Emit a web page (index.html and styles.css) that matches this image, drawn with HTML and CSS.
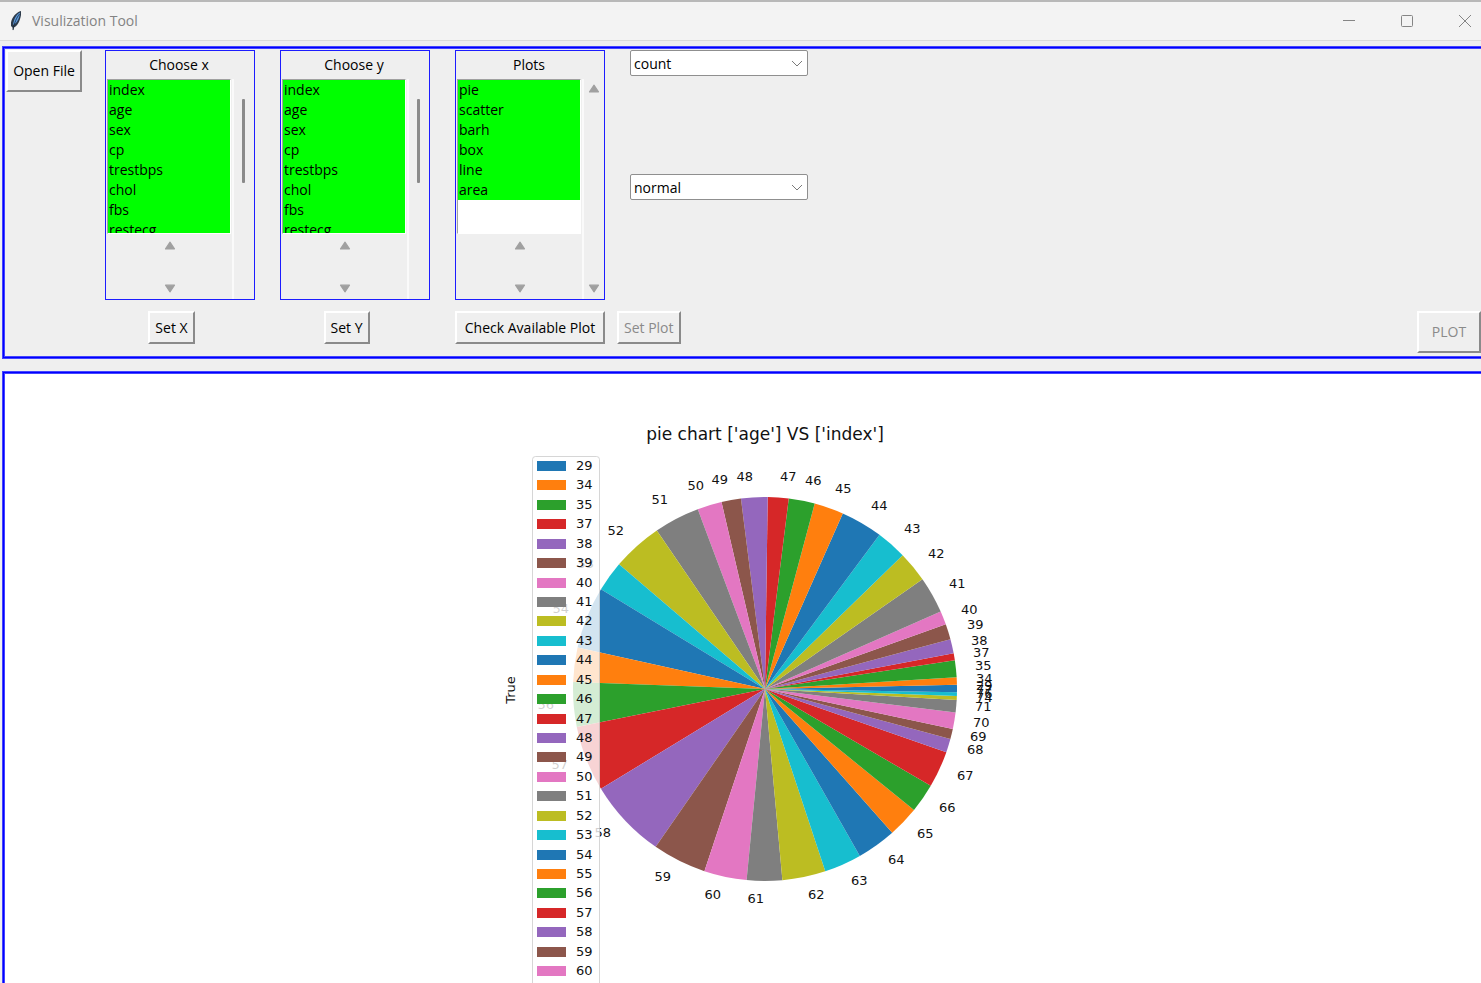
FILE: index.html
```html
<!DOCTYPE html>
<html lang="en">
<head>
<meta charset="utf-8">
<title>Visulization Tool</title>
<link rel="stylesheet" href="styles.css">
</head>
<body>
<header class="titlebar">
  <svg class="feather" viewBox="0 0 14 22" width="14" height="22" aria-hidden="true">
    <path d="M12 1C7.500 2 3 7 2 12.500L2 16L3.500 17.500L4 20.500L5 17.500C8.500 16 11 11 12 5Z" fill="#2c3a4a"/>
    <path d="M11 2.500C8 4 5 8 4 15C8.500 13 10.500 8 11 2.500Z" fill="#5b9be0"/>
    <path d="M10.500 4C7.500 8 5.500 12 4 20" fill="none" stroke="#1c2a3a" stroke-width=".8"/>
  </svg>
  <h1 class="title">Visulization Tool</h1>
  <div class="window-buttons">
    <button class="window-button" aria-label="Minimize"><svg viewBox="0 0 12 12" width="12" height="12"><path d="M0 5.500H12"/></svg></button>
    <button class="window-button" aria-label="Maximize"><svg viewBox="0 0 12 12" width="12" height="12"><rect x=".5" y=".5" width="11" height="11" rx="1"/></svg></button>
    <button class="window-button" aria-label="Close"><svg viewBox="0 0 12 12" width="12" height="12"><path d="M0 0L12 12M12 0L0 12"/></svg></button>
  </div>
</header>

<main class="workspace">
  <section class="panel toolbar">
    <div class="file-column"><button class="button tall">Open File</button></div>

    <div class="column">
      <div class="group">
        <label class="group-label" for="choose-x">Choose x</label>
        <div class="list-side">
          <select class="listbox" id="choose-x" multiple>
            <option>index</option><option>age</option><option>sex</option><option>cp</option><option>trestbps</option><option>chol</option><option>fbs</option><option>restecg</option>
          </select>
          <div class="scroller">
            <svg class="arrow" viewBox="0 0 10 8"><path d="M5 1L9 7H1Z"/></svg>
            <svg class="arrow" viewBox="0 0 10 8"><path d="M5 7L1 1H9Z"/></svg>
          </div>
        </div>
        <div class="track"><span class="thumb"></span></div>
      </div>
      <div class="action narrow"><button class="button">Set X</button></div>
    </div>

    <div class="column">
      <div class="group">
        <label class="group-label" for="choose-y">Choose y</label>
        <div class="list-side">
          <select class="listbox" id="choose-y" multiple>
            <option>index</option><option>age</option><option>sex</option><option>cp</option><option>trestbps</option><option>chol</option><option>fbs</option><option>restecg</option>
          </select>
          <div class="scroller">
            <svg class="arrow" viewBox="0 0 10 8"><path d="M5 1L9 7H1Z"/></svg>
            <svg class="arrow" viewBox="0 0 10 8"><path d="M5 7L1 1H9Z"/></svg>
          </div>
        </div>
        <div class="track"><span class="thumb"></span></div>
      </div>
      <div class="action narrow"><button class="button">Set Y</button></div>
    </div>

    <div class="column">
      <div class="group">
        <label class="group-label" for="plots">Plots</label>
        <div class="list-side">
          <select class="listbox" id="plots" multiple>
            <option>pie</option><option>scatter</option><option>barh</option><option>box</option><option>line</option><option>area</option>
          </select>
          <div class="scroller">
            <svg class="arrow" viewBox="0 0 10 8"><path d="M5 1L9 7H1Z"/></svg>
            <svg class="arrow" viewBox="0 0 10 8"><path d="M5 7L1 1H9Z"/></svg>
          </div>
        </div>
        <div class="track ends">
          <svg class="arrow" viewBox="0 0 10 8"><path d="M5 1L9 7H1Z"/></svg>
          <svg class="arrow" viewBox="0 0 10 8"><path d="M5 7L1 1H9Z"/></svg>
        </div>
      </div>
      <div class="action"><button class="button wide">Check Available Plot</button></div>
    </div>

    <div class="options">
      <div class="combo">
        <select class="combo-select" aria-label="Aggregate"><option>count</option></select>
        <svg class="chevron" viewBox="0 0 12 8"><path d="M1 1L6 6L11 1"/></svg>
      </div>
      <div class="combo">
        <select class="combo-select" aria-label="Mode"><option>normal</option></select>
        <svg class="chevron" viewBox="0 0 12 8"><path d="M1 1L6 6L11 1"/></svg>
      </div>
      <div><button class="button" disabled>Set Plot</button></div>
    </div>

    <button class="button tall plot-button" disabled>PLOT</button>
  </section>

  <section class="panel figure">
    <svg class="chart" id="chart" viewBox="0 0 560 620" width="560" height="620" role="img" aria-label="Pie chart of age against index"></svg>
  </section>
</main>
<script src="chart.js"></script>
</body>
</html>
```
FILE: styles.css
```css
* { box-sizing: border-box; }

body {
  margin: 0;
  height: 100vh;
  display: flex;
  flex-direction: column;
  overflow: hidden;
  background: #efefef;
  color: #000;
  font: 14px/20px "Open Sans", "Noto Sans", sans-serif;
}

button, select { font: inherit; color: inherit; }

.titlebar {
  display: flex;
  align-items: center;
  height: 41px;
  flex: none;
  padding-left: 9px;
  background: #f3f3f3;
  border-top: 2px solid #b8b8b8;
  border-bottom: 1px solid #dadada;
}
.feather { margin-right: 9px; }
.title { margin: 0; font-size: 14px; font-weight: 400; color: #838383; }
.window-buttons { display: flex; margin-left: auto; gap: 34px; padding-right: 4px; }
.window-button { display: flex; padding: 6px; border: 0; background: none; }
.window-button svg { fill: none; stroke: #858585; overflow: visible; }

.workspace {
  display: flex;
  flex-direction: column;
  flex: 1;
  min-height: 0;
  gap: 12px;
  padding: 5px 0 0 2px;
}

.panel {
  border: 1px solid #4444ff;
  border-right: 0;
  box-shadow: inset 0 1px #0000ff, inset 1px 0 #0000ff, inset 0 -1px #0000ff,
    inset 0 2px #4444ff, inset 2px 0 #4444ff, inset 0 -2px #4444ff;
}

.toolbar { display: flex; height: 313px; flex: none; padding: 3px 0 5px 3px; }

.button {
  height: 33px;
  padding: 0 5px;
  background: #efefef;
  border: 2px solid;
  border-color: #fff #8a8a8a #8a8a8a #fff;
  white-space: nowrap;
}
.button:disabled { color: #8a8a8a; }
.tall { height: 42px; }
.wide { width: 150px; }

.file-column { width: 99px; }
.file-column .button { width: 76px; }
.column { width: 175px; flex: none; }
.group {
  display: grid;
  grid-template: 28px 1fr / 125px 1fr;
  width: 150px;
  height: 250px;
  padding-left: 1px;
  border: 1px solid #1c1cff;
}
.group-label { grid-column: 1 / -1; padding-right: 3px; text-align: center; line-height: 28px; }
.list-side { display: flex; flex-direction: column; }
.listbox {
  width: 124px;
  height: 155px;
  padding: 0;
  background: #fff;
  border: 1px solid;
  border-color: #a0a0a0 #fff #fff #a0a0a0;
  border-radius: 0;
  overflow: hidden;
  scrollbar-width: none;
}
.listbox option {
  height: 20px;
  min-height: 20px;
  padding: 0 0 0 1px;
  line-height: 20px;
  background: #00ff00;
  color: #000;
}
.scroller {
  display: flex;
  flex: 1;
  flex-direction: column;
  align-items: center;
  justify-content: space-between;
  padding: 7px 0 6px;
}
.arrow { width: 12px; height: 9px; fill: #a0a0a0; stroke: #a0a0a0; stroke-linejoin: round; flex: none; }
.track { border-left: 2px solid #fafafa; padding: 20px 0 0 8px; }
.thumb { display: block; width: 3px; height: 84px; border-radius: 1px; background: #8a8a8a; }
.ends {
  display: flex;
  flex-direction: column;
  align-items: center;
  justify-content: space-between;
  padding: 5px 0 6px;
}
.action { display: flex; justify-content: center; width: 150px; padding-top: 11px; }
.narrow { padding-right: 17px; }

.options { display: grid; grid-template-rows: 124px 137px auto; width: 191px; flex: none; margin-left: -13px; }
.combo { position: relative; margin-left: 13px; height: 26px; }
.combo-select {
  width: 178px;
  height: 26px;
  padding: 1px 3px 0;
  appearance: none;
  background: #fff;
  border: 1px solid #8f8f8f;
  border-radius: 2px;
}
.chevron {
  position: absolute;
  top: 10px;
  right: 5px;
  width: 12px;
  height: 8px;
  fill: none;
  stroke: #7a7a7a;
  pointer-events: none;
}
.plot-button { width: 64px; margin-left: auto; align-self: flex-end; }

.figure {
  display: flex;
  flex: 1;
  justify-content: center;
  min-height: 0;
  padding-left: 3px;
  overflow: hidden;
  background: #fff;
  border-bottom: 0;
  box-shadow: inset 0 1px #0000ff, inset 1px 0 #0000ff, inset 0 2px #4444ff, inset 2px 0 #4444ff;
}
.chart { flex: none; font-family: "DejaVu Sans", sans-serif; font-size: 13px; fill: #111; }
.chart-title { font-size: 17px; }
.legend-frame { fill: #fff; fill-opacity: .8; stroke: #ccc; stroke-opacity: .8; }
```
FILE: chart.js
```js
const svg = document.getElementById('chart');
const colors = ['#1f77b4', '#ff7f0e', '#2ca02c', '#d62728', '#9467bd',
  '#8c564b', '#e377c2', '#7f7f7f', '#bcbd22', '#17becf'];

// Each entry: age, end angle of its wedge in degrees, counter-clockwise.
const wedges = [
  [29, 1.3], [34, 3.5], [35, 8.6], [37, 10.7], [38, 15], [39, 19.7], [40, 23.8],
  [41, 34.9], [42, 44.2], [43, 53.4], [44, 66.1], [45, 75], [46, 82.9], [47, 89.2],
  [48, 97.2], [49, 103.1], [50, 110.5], [51, 124.3], [52, 139.5], [53, 148.7],
  [54, 167.5], [55, 177.9], [56, 191.4], [57, 211.3], [58, 235.3], [59, 251.6],
  [60, 264.5], [61, 275.2], [62, 288.3], [63, 299.6], [64, 311.5], [65, 320.9],
  [66, 329.7], [67, 340.8], [68, 344.9], [69, 348], [70, 353], [71, 356.7],
  [74, 357.9], [76, 359], [77, 360]
];
const cx = 301, cy = 317, radius = 192;

function add(name, attrs, text) {
  const node = document.createElementNS('http://www.w3.org/2000/svg', name);
  for (const key in attrs) node.setAttribute(key, attrs[key]);
  if (text !== undefined) node.textContent = text;
  svg.appendChild(node);
}
function point(angle, r) {
  const a = angle * Math.PI / 180;
  return [cx + r * Math.cos(a), cy - r * Math.sin(a)];
}

let start = 0;
wedges.forEach(([age, end], i) => {
  const [x1, y1] = point(start, radius);
  const [x2, y2] = point(end, radius);
  add('path', {
    d: `M${cx} ${cy}L${x1} ${y1}A${radius} ${radius} 0 0 0 ${x2} ${y2}Z`,
    fill: colors[i % 10]
  });
  const [lx, ly] = point((start + end) / 2, radius * 1.1);
  add('text', { x: Math.round(lx), y: Math.round(ly + 3), 'text-anchor': lx < cx ? 'end' : 'start' }, age);
  start = end;
});

add('text', { x: cx, y: 68, class: 'chart-title', 'text-anchor': 'middle' },
  "pie chart ['age'] VS ['index']");
add('text', { transform: 'translate(51 318) rotate(-90)', 'text-anchor': 'middle' }, 'True');

add('rect', { x: 68.5, y: 84.5, width: 67, height: 560, rx: 3, class: 'legend-frame' });
wedges.slice(0, 27).forEach(([age], i) => {
  const y = 94 + i * 19.43;
  add('rect', { x: 73, y: Math.round(y - 5), width: 29, height: 10, fill: colors[i % 10] });
  add('text', { x: 112, y: Math.round(y + 4) }, age);
});
```
